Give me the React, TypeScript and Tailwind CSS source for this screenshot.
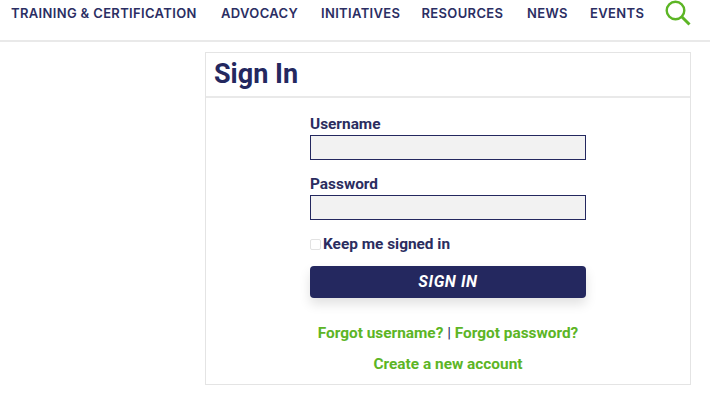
export default function App() {
  const nav = [
    { t: "TRAINING & CERTIFICATION", w: "w-[187px]" },
    { t: "ADVOCACY", w: "w-[77px]" },
    { t: "INITIATIVES", w: "w-[77.5px]" },
    { t: "RESOURCES", w: "w-[82.5px]" },
    { t: "NEWS", w: "w-[40px]" },
    { t: "EVENTS", w: "w-[52px]" },
  ];
  return (
    <div className="w-[710px] h-[400px] overflow-hidden bg-white font-['Roboto',sans-serif]">
      <header className="h-[42px] border-b-2 border-[#e9e9e9] flex items-start pl-[11px]">
        <nav className="flex gap-[23px] pt-[5px]">
          {nav.map((n) => (
            <a key={n.t} className={`${n.w} whitespace-nowrap text-[13px] leading-[16px] font-semibold tracking-[0.35px] text-[#2b2e63] font-['Inter',sans-serif]`}>
              {n.t}
            </a>
          ))}
        </nav>
        <svg className="ml-[23px] mt-0" width="28" height="27" viewBox="0 0 28 27" fill="none" stroke="#5cb525" strokeWidth="2.4">
          <circle cx="10.5" cy="10.5" r="8.8" />
          <path d="M16.5 16.5L24.5 24.5" strokeWidth="3" />
        </svg>
      </header>
      <main className="pl-[205px] pt-[10px]">
        <section className="w-[486px] h-[333px] border border-[#e4e4e4]">
          <div className="h-[45px] border-b-2 border-[#e9e9e9] pl-[8px] pt-[3px]">
            <h1 className="text-[27px] leading-[36px] font-bold text-[#24285f]">Sign In</h1>
          </div>
          <form className="w-[276px] ml-[104px] pt-[16px] text-[#2b2d5f]">
            <label className="block text-[15.4px] leading-[20px] font-bold">Username</label>
            <div className="mt-[1px] h-[25px] border-[1.5px] border-[#24285f] bg-[#f2f2f2]" />
            <label className="block mt-[14px] text-[15.4px] leading-[20px] font-bold">Password</label>
            <div className="mt-[1px] h-[25px] border-[1.5px] border-[#24285f] bg-[#f2f2f2]" />
            <div className="mt-[14px] h-[20px] flex items-center">
              <span className="w-[11px] h-[11px] mt-[1px] mr-[2px] rounded-[2px] border border-[#e2e2e2] bg-white" />
              <span className="text-[15.4px] leading-[20px] font-bold">Keep me signed in</span>
            </div>
            <button type="button" className="mt-[12px] w-full h-[32px] rounded-[4px] bg-[#24285f] text-white text-[16px] font-bold italic tracking-[0.6px] shadow-[0_6px_12px_rgba(0,0,0,0.12)]">
              SIGN IN
            </button>
            <p className="mt-[25px] text-center text-[15.4px] leading-[20px] font-bold text-[#5cb525] whitespace-nowrap">
              Forgot username? <span className="font-normal text-[#2b2d5f]">|</span> Forgot password?
            </p>
            <p className="mt-[11px] text-center text-[15.4px] leading-[20px] font-bold text-[#5cb525]">Create a new account</p>
          </form>
        </section>
      </main>
    </div>
  );
}
